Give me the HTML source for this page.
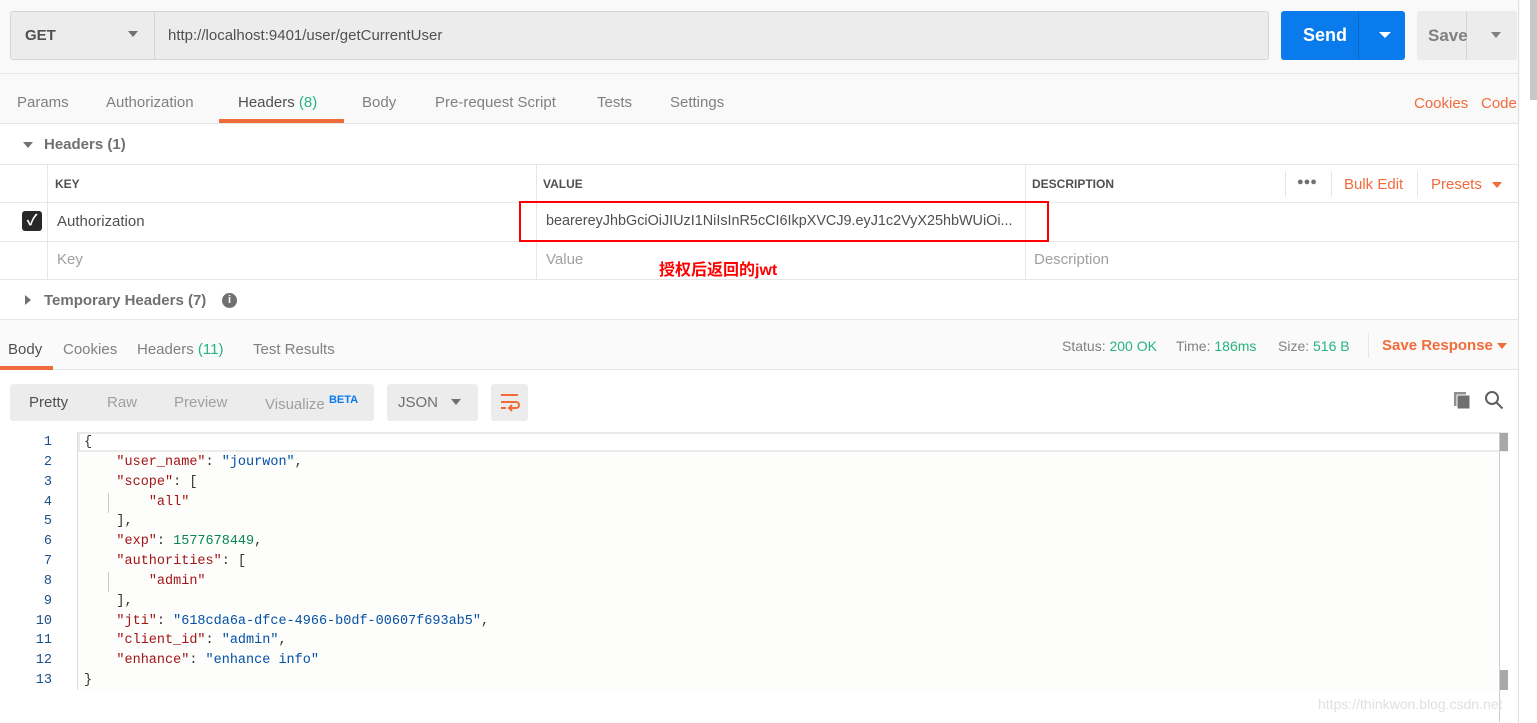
<!DOCTYPE html>
<html><head><meta charset="utf-8"><style>
*{margin:0;padding:0;box-sizing:border-box}
body{width:1537px;height:723px;overflow:hidden;background:#fff;font-family:"Liberation Sans","Noto Sans CJK SC",sans-serif;position:relative;color:#505050}
.a{position:absolute;white-space:nowrap}
.t{font-size:15px;color:#808080}
.code{font-family:"Liberation Mono","DejaVu Sans Mono",monospace;font-size:13.5px}
.k{color:#a31515}.s{color:#0451a5}.n{color:#098658}.p{color:#333}
</style></head><body>
<div class="a" style="left:0;top:0;width:1520px;height:123px;background:#f9f9f9"></div>
<div class="a" style="left:1530px;top:0;width:7px;height:100px;background:#c8c8c8"></div>
<div class="a" style="left:1518px;top:0;width:1px;height:723px;background:#e0e0e0"></div>
<div class="a" style="left:10px;top:11px;width:1259px;height:49px;background:#ececec;border:1px solid #d6d6d6;border-radius:3px"></div>
<div class="a" style="left:154px;top:12px;width:1px;height:47px;background:#d6d6d6"></div>
<div class="a" style="left:25px;top:27px;font-size:15px;font-weight:bold;color:#505050">GET</div>
<div class="a" style="left:128px;top:31px;border-left:5px solid transparent;border-right:5px solid transparent;border-top:6px solid #707070"></div>
<div class="a" style="left:168px;top:27px;font-size:15px;color:#505050">http://localhost:9401/user/getCurrentUser</div>
<div class="a" style="left:1281px;top:11px;width:124px;height:49px;background:#097bed;border-radius:3px"></div>
<div class="a" style="left:1358px;top:11px;width:1px;height:49px;background:#0669cc"></div>
<div class="a" style="left:1303px;top:25px;font-size:18px;font-weight:bold;color:#fff">Send</div>
<div class="a" style="left:1379px;top:32px;border-left:6px solid transparent;border-right:6px solid transparent;border-top:6px solid #fff"></div>
<div class="a" style="left:1417px;top:11px;width:100px;height:49px;background:#ececec;border-radius:3px"></div>
<div class="a" style="left:1466px;top:11px;width:1px;height:49px;background:#d6d6d6"></div>
<div class="a" style="left:1428px;top:26px;font-size:17px;font-weight:bold;color:#808080">Save</div>
<div class="a" style="left:1491px;top:32px;border-left:5px solid transparent;border-right:5px solid transparent;border-top:6px solid #808080"></div>
<div class="a" style="left:0;top:73px;width:1518px;height:1px;background:#e6e6e6"></div>
<div class="a t" style="left:17px;top:94px">Params</div>
<div class="a t" style="left:106px;top:94px">Authorization</div>
<div class="a t" style="left:238px;top:94px;color:#505050">Headers <span style="color:#26b47f">(8)</span></div>
<div class="a t" style="left:362px;top:94px">Body</div>
<div class="a t" style="left:435px;top:94px">Pre-request Script</div>
<div class="a t" style="left:597px;top:94px">Tests</div>
<div class="a t" style="left:670px;top:94px">Settings</div>
<div class="a t" style="left:1414px;top:95px;color:#f26b3a">Cookies</div>
<div class="a t" style="left:1481px;top:95px;color:#f26b3a">Code</div>
<div class="a" style="left:0;top:123px;width:1518px;height:1px;background:#e6e6e6"></div>
<div class="a" style="left:219px;top:119px;width:125px;height:4px;background:#f26b3a"></div>
<div class="a" style="left:23px;top:142px;border-left:5px solid transparent;border-right:5px solid transparent;border-top:6px solid #707070"></div>
<div class="a" style="left:44px;top:136px;font-size:15px;font-weight:bold;color:#707070">Headers (1)</div>
<div class="a" style="left:0;top:164px;width:1518px;height:1px;background:#e6e6e6"></div>
<div class="a" style="left:0;top:202px;width:1518px;height:1px;background:#e6e6e6"></div>
<div class="a" style="left:0;top:241px;width:1518px;height:1px;background:#e6e6e6"></div>
<div class="a" style="left:0;top:279px;width:1518px;height:1px;background:#e6e6e6"></div>
<div class="a" style="left:47px;top:164px;width:1px;height:115px;background:#e6e6e6"></div>
<div class="a" style="left:536px;top:164px;width:1px;height:115px;background:#e6e6e6"></div>
<div class="a" style="left:1025px;top:164px;width:1px;height:115px;background:#e6e6e6"></div>
<div class="a" style="left:1285px;top:171px;width:1px;height:26px;background:#e6e6e6"></div>
<div class="a" style="left:1331px;top:171px;width:1px;height:26px;background:#e6e6e6"></div>
<div class="a" style="left:1417px;top:171px;width:1px;height:26px;background:#e6e6e6"></div>
<div class="a" style="left:55px;top:177px;font-size:12px;font-weight:bold;color:#505050">KEY</div>
<div class="a" style="left:543px;top:177px;font-size:12px;font-weight:bold;color:#505050">VALUE</div>
<div class="a" style="left:1032px;top:177px;font-size:12px;font-weight:bold;color:#505050">DESCRIPTION</div>
<div class="a" style="left:1297px;top:176px;font-size:11px;color:#707070;letter-spacing:0px">●●●</div>
<div class="a t" style="left:1344px;top:176px;color:#f26b3a">Bulk Edit</div>
<div class="a t" style="left:1431px;top:176px;color:#f26b3a">Presets</div>
<div class="a" style="left:1492px;top:182px;border-left:5px solid transparent;border-right:5px solid transparent;border-top:6px solid #f26b3a"></div>
<div class="a" style="left:22px;top:211px;width:20px;height:20px;background:#282828;border-radius:3px;color:#fff;font-size:15px;text-align:center;line-height:20px;font-weight:bold">✓</div>
<div class="a" style="left:57px;top:213px;font-size:15px;color:#505050">Authorization</div>
<div class="a" style="left:546px;top:213px;font-size:14.4px;color:#505050">bearereyJhbGciOiJIUzI1NiIsInR5cCI6IkpXVCJ9.eyJ1c2VyX25hbWUiOi...</div>
<div class="a" style="left:519px;top:201px;width:530px;height:41px;border:2px solid #f00"></div>
<div class="a" style="left:57px;top:251px;font-size:15px;color:#a0a0a0">Key</div>
<div class="a" style="left:546px;top:251px;font-size:15px;color:#a0a0a0">Value</div>
<div class="a" style="left:1034px;top:251px;font-size:15px;color:#a0a0a0">Description</div>
<div class="a" style="left:659px;top:256px;font-size:16px;font-weight:bold;color:#f00">授权后返回的jwt</div>
<div class="a" style="left:25px;top:295px;border-top:5px solid transparent;border-bottom:5px solid transparent;border-left:6px solid #707070"></div>
<div class="a" style="left:44px;top:292px;font-size:15px;font-weight:bold;color:#707070">Temporary Headers (7)</div>
<div class="a" style="left:222px;top:293px;width:15px;height:15px;border-radius:50%;background:#707070;color:#fff;font-size:11px;text-align:center;line-height:15px;font-weight:bold">i</div>
<div class="a" style="left:0;top:319px;width:1518px;height:51px;background:#fafafa;border-top:1px solid #e6e6e6;border-bottom:1px solid #e6e6e6"></div>
<div class="a t" style="left:8px;top:341px;color:#505050">Body</div>
<div class="a" style="left:0;top:366px;width:53px;height:4px;background:#f26b3a"></div>
<div class="a t" style="left:63px;top:341px">Cookies</div>
<div class="a t" style="left:137px;top:341px">Headers <span style="color:#26b47f">(11)</span></div>
<div class="a t" style="left:253px;top:341px">Test Results</div>
<div class="a" style="left:1062px;top:338px;font-size:14px;color:#808080">Status: <span style="color:#26b47f">200 OK</span></div>
<div class="a" style="left:1176px;top:338px;font-size:14px;color:#808080">Time: <span style="color:#26b47f">186ms</span></div>
<div class="a" style="left:1278px;top:338px;font-size:14px;color:#808080">Size: <span style="color:#26b47f">516 B</span></div>
<div class="a" style="left:1368px;top:333px;width:1px;height:25px;background:#e6e6e6"></div>
<div class="a" style="left:1382px;top:337px;font-size:15px;font-weight:bold;color:#f26b3a">Save Response</div>
<div class="a" style="left:1497px;top:343px;border-left:5px solid transparent;border-right:5px solid transparent;border-top:6px solid #f26b3a"></div>
<div class="a" style="left:10px;top:384px;width:364px;height:37px;background:#ececec;border-radius:3px"></div>
<div class="a t" style="left:29px;top:394px;color:#505050">Pretty</div>
<div class="a t" style="left:107px;top:394px;color:#a0a0a0">Raw</div>
<div class="a t" style="left:174px;top:394px;color:#a0a0a0">Preview</div>
<div class="a t" style="left:265px;top:394px;color:#a0a0a0">Visualize <sup style="color:#097bed;font-size:11px;font-weight:bold">BETA</sup></div>
<div class="a" style="left:387px;top:384px;width:91px;height:37px;background:#ececec;border-radius:3px"></div>
<div class="a t" style="left:398px;top:394px;color:#707070">JSON</div>
<div class="a" style="left:451px;top:399px;border-left:5px solid transparent;border-right:5px solid transparent;border-top:6px solid #707070"></div>
<div class="a" style="left:491px;top:384px;width:37px;height:37px;background:#ececec;border-radius:3px"></div>
<svg class="a" style="left:498px;top:391px" width="24" height="24" viewBox="0 0 24 24" fill="none" stroke="#f26b3a" stroke-width="2"><path d="M3 4h17M3 11h15a3 3 0 0 1 0 6h-6M14 14l-3 3 3 3M3 17h5"/></svg>
<svg class="a" style="left:1452px;top:390px" width="20" height="20" viewBox="0 0 20 20"><rect x="2" y="2" width="12" height="14" fill="#909090"/><rect x="5" y="5" width="13" height="14" fill="#707070" stroke="#fff" stroke-width="1"/></svg>
<svg class="a" style="left:1484px;top:390px" width="20" height="20" viewBox="0 0 20 20" fill="none" stroke="#606060" stroke-width="2"><circle cx="8" cy="8" r="6"/><path d="M12.5 12.5l6 6"/></svg>
<div class="a" style="left:78px;top:432px;width:1430px;height:20px;border:2px solid #ebebeb;border-right:none"></div>
<div class="a" style="left:78px;top:452px;width:1421px;height:240px;background:#fdfdfc"></div>
<div class="a" style="left:77px;top:432px;width:1px;height:258px;background:#ddd"></div>
<div class="a" style="left:1499px;top:432px;width:1px;height:290px;background:#ccc"></div>
<div class="a" style="left:1500px;top:433px;width:8px;height:18px;background:#a8a8a8"></div>
<div class="a" style="left:1500px;top:670px;width:8px;height:20px;background:#a8a8a8"></div>
<div class="a" style="left:108px;top:493px;width:1px;height:20px;background:#ccc"></div>
<div class="a" style="left:108px;top:572px;width:1px;height:20px;background:#ccc"></div>
<div class="a code" style="left:20px;top:433px;width:32px;text-align:right;line-height:19.85px;color:#1c4e8a;white-space:normal">1<br>2<br>3<br>4<br>5<br>6<br>7<br>8<br>9<br>10<br>11<br>12<br>13</div>
<pre class="a code p" style="left:84px;top:433px;line-height:19.85px;white-space:pre">{
    <span class="k">"user_name"</span>: <span class="s">"jourwon"</span>,
    <span class="k">"scope"</span>: [
        <span class="k">"all"</span>
    ],
    <span class="k">"exp"</span>: <span class="n">1577678449</span>,
    <span class="k">"authorities"</span>: [
        <span class="k">"admin"</span>
    ],
    <span class="k">"jti"</span>: <span class="s">"618cda6a-dfce-4966-b0df-00607f693ab5"</span>,
    <span class="k">"client_id"</span>: <span class="s">"admin"</span>,
    <span class="k">"enhance"</span>: <span class="s">"enhance info"</span>
}</pre>
<div class="a" style="left:1318px;top:696px;font-size:14px;color:#e0e0e0">https://thinkwon.blog.csdn.net</div>
</body></html>
